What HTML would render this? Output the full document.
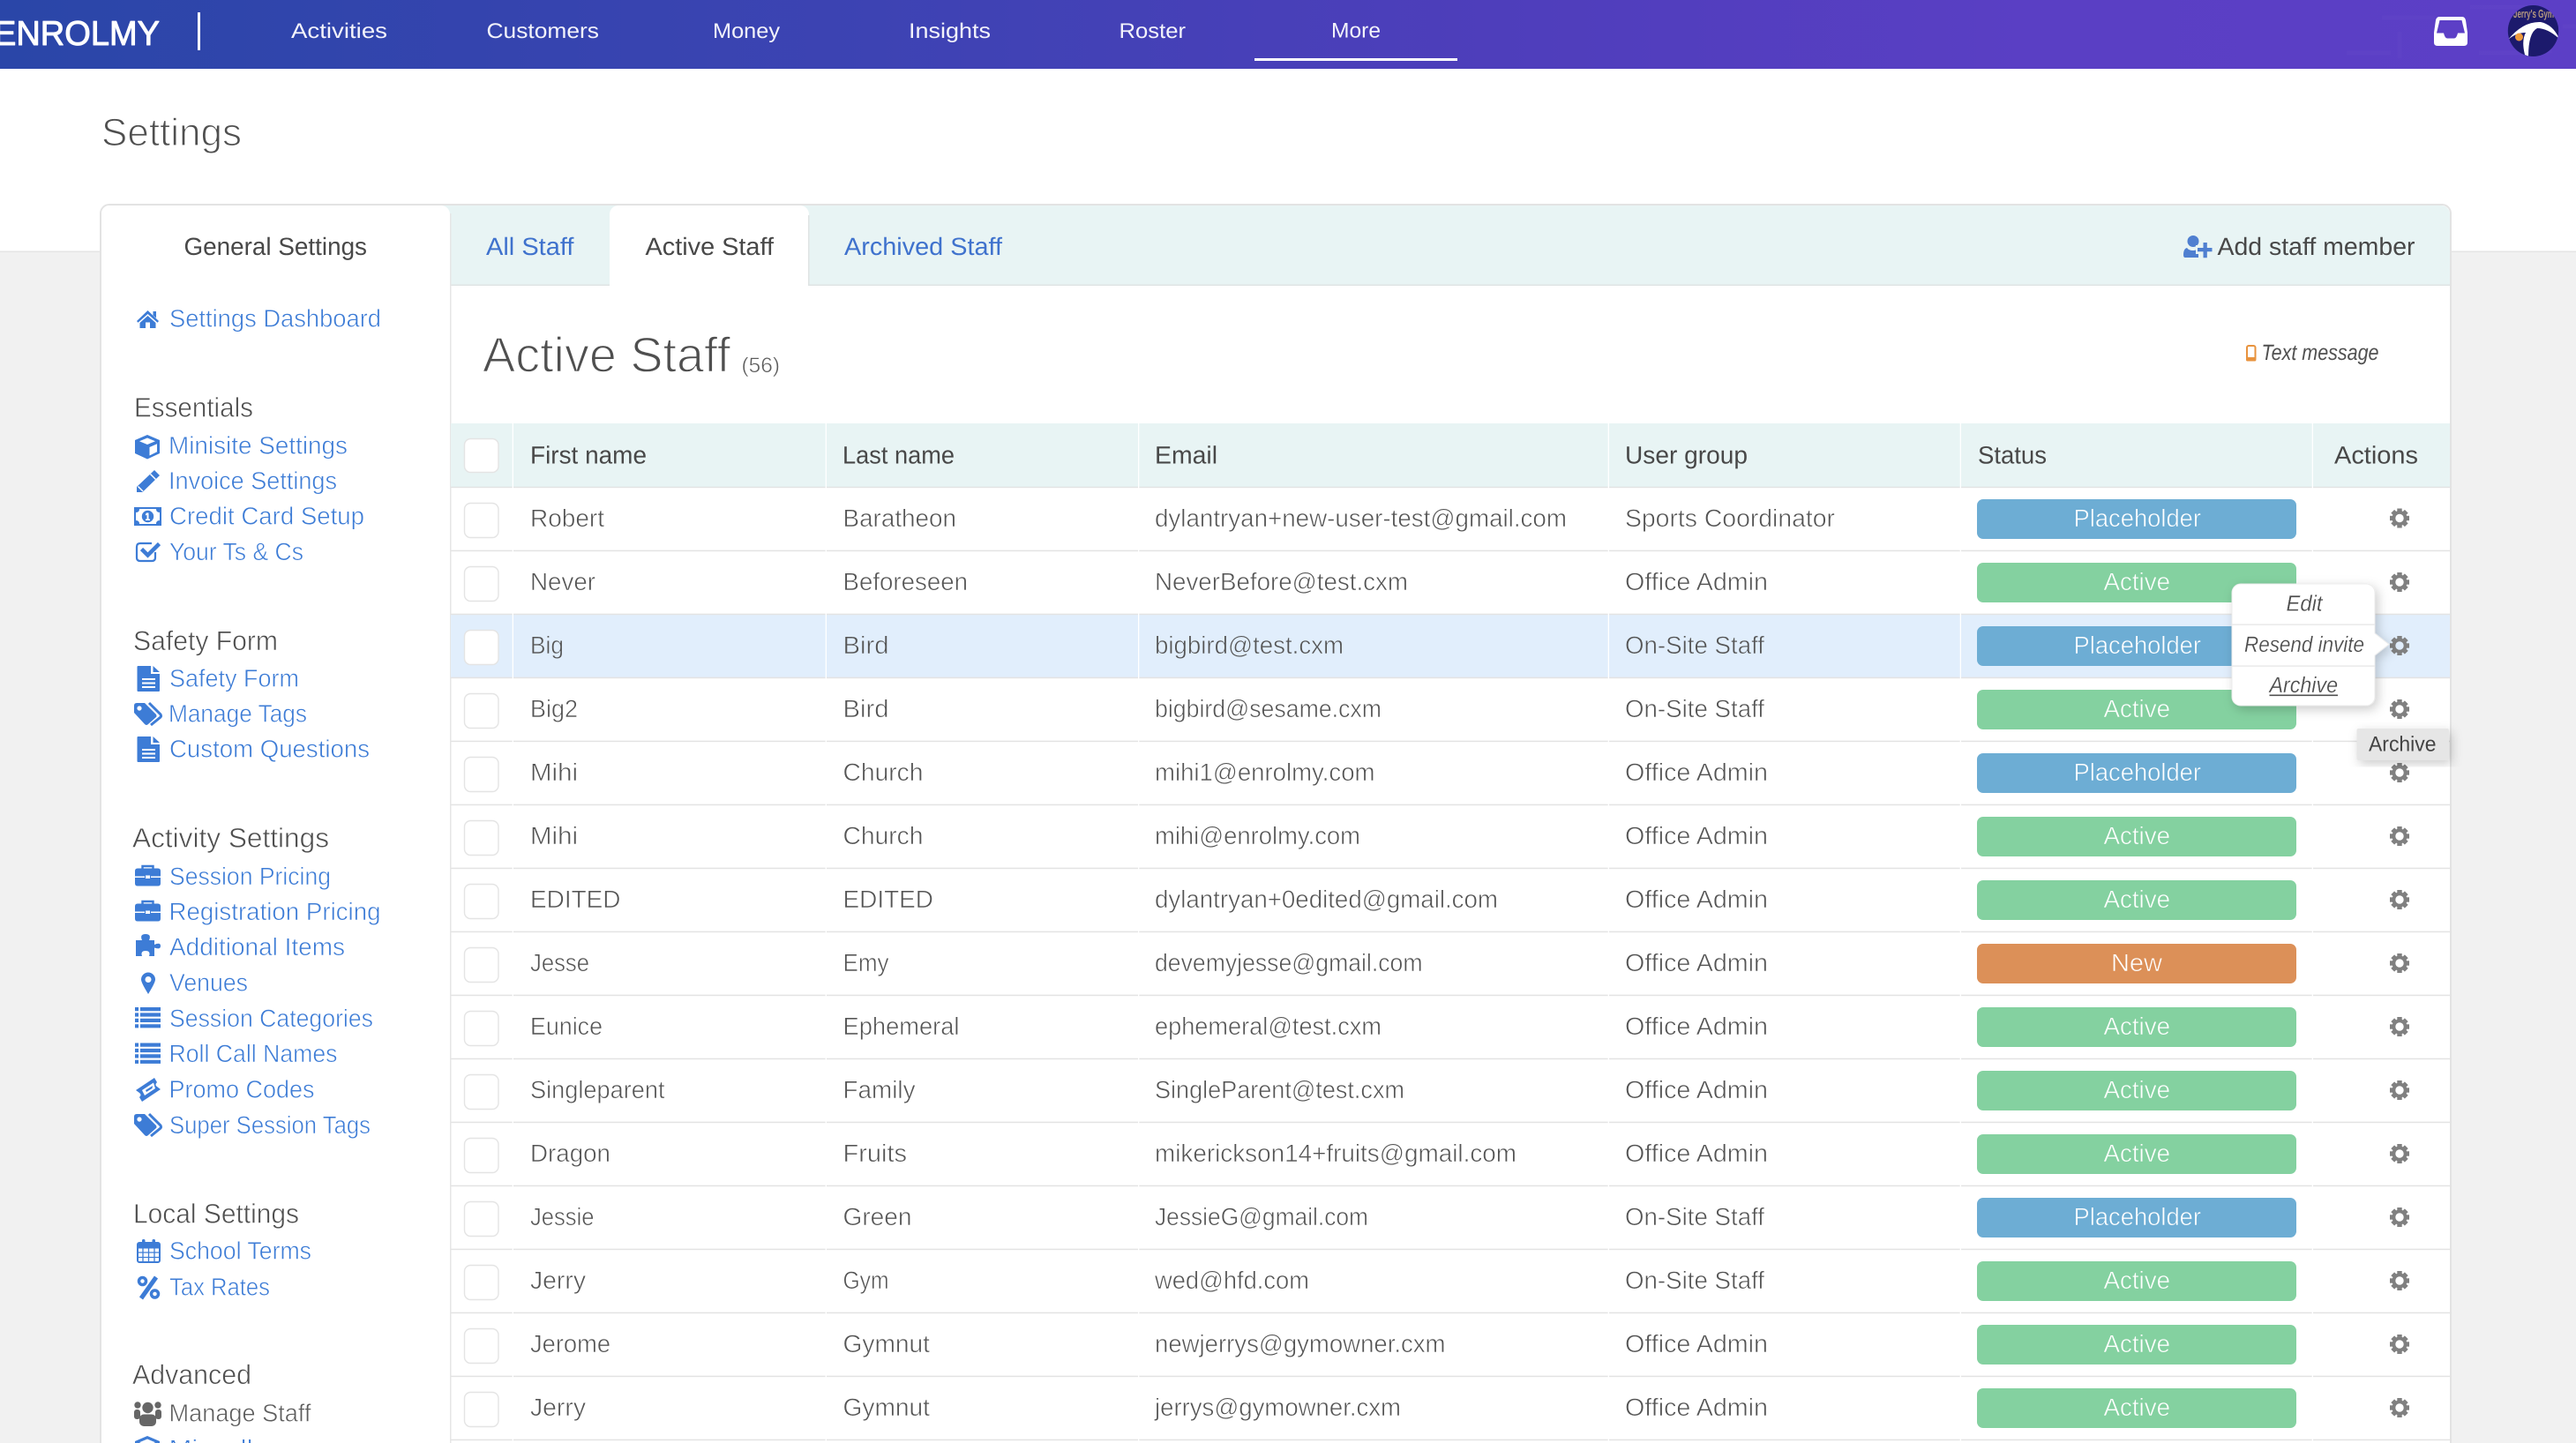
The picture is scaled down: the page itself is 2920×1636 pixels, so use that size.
<!DOCTYPE html>
<html lang="en">
<head>
<meta charset="utf-8">
<title>Settings - Active Staff</title>
<style>
html,body{margin:0;padding:0;width:2920px;height:1636px;overflow:hidden;background:#fff}
svg{display:block}
text{font-family:"Liberation Sans",sans-serif;text-rendering:geometricPrecision}
.b text{font-size:28px;fill:#545454;stroke:#fff;stroke-width:.6px}
.b .hl text{stroke:#e1eefc}
.h text{font-size:28px;fill:#484848}
.l text{font-size:28px;fill:#3d7cd6;stroke:#fff;stroke-width:.6px}
.s text{font-size:31px;fill:#4f4f4f;stroke:#fff;stroke-width:.6px}
.n text{font-size:24px;fill:#f3f3fb}
.w text{font-size:28px;fill:#fff;stroke-width:.6px}
.w .ga{stroke:#84d1a0}.w .gp{stroke:#6dadd4}.w .gn{stroke:#dc9058}
.m text{font-size:25px;font-style:italic;fill:#4c4c4c;stroke:#fff;stroke-width:.25px}
</style>
</head>
<body>
<svg xmlns="http://www.w3.org/2000/svg" width="2920" height="1636" viewBox="0 0 2920 1636">
<defs>
<linearGradient id="nav" gradientUnits="userSpaceOnUse" x1="0" y1="0" x2="2920" y2="0">
<stop offset="0" stop-color="#2a46a8"/><stop offset=".34" stop-color="#3d43b3"/><stop offset=".58" stop-color="#4e3ebb"/><stop offset=".79" stop-color="#5a3fc4"/><stop offset="1" stop-color="#5c3fc6"/>
</linearGradient>
<filter id="sh" x="-20%" y="-20%" width="140%" height="140%"><feDropShadow dx="3" dy="4" stdDeviation="6" flood-color="#000" flood-opacity=".2"/></filter>
<clipPath id="av"><ellipse cx="2871.5" cy="35" rx="28.7" ry="29"/></clipPath>
<g id="gear" fill="#808080">
<circle r="6.6" fill="none" stroke="#808080" stroke-width="3.8"/>
<path d="M-2.7-11h5.4v5h-5.4z"/><path d="M-2.7-11h5.4v5h-5.4z" transform="rotate(45)"/><path d="M-2.7-11h5.4v5h-5.4z" transform="rotate(90)"/><path d="M-2.7-11h5.4v5h-5.4z" transform="rotate(135)"/><path d="M-2.7-11h5.4v5h-5.4z" transform="rotate(180)"/><path d="M-2.7-11h5.4v5h-5.4z" transform="rotate(225)"/><path d="M-2.7-11h5.4v5h-5.4z" transform="rotate(270)"/><path d="M-2.7-11h5.4v5h-5.4z" transform="rotate(315)"/>
</g>
<g id="cube"><path fill="#3d7cd6" d="M167 493L181 499V514L167 520.5L153 514V499Z"/><path fill="#fff" d="M167 496.5L176 500.3L167 504L158 500.3ZM169.5 507L178 503.3V512.3L169.5 516.5Z"/></g>
<g id="file"><path fill="#3d7cd6" d="M155.5 1q0-1 1-1H171V9H181V28q0 1-1 1H156.5q-1 0-1-1Z"/><path fill="#3d7cd6" d="M173.5 0L181 7H173.5Z"/><path fill="#fff" d="M161 14h15v2h-15zM161 18.500h15v2h-15zM161 23h15v2h-15z"/></g>
<g id="tags"><path fill="#3d7cd6" d="M152 3Q152 0 155 0H164L177 13Q178 15 177 16L168 24Q166 26 164 24L152 11Z"/><circle cx="158" cy="6" r="2.600" fill="#fff"/><path fill="none" stroke="#3d7cd6" stroke-width="3" d="M169 0L182 13Q183 15 182 16L171 25"/></g>
<g id="case"><path fill="#3d7cd6" d="M156 5H179Q182 5 182 8V22Q182 25 179 25H156Q153 25 153 22V8Q153 5 156 5Z"/><path fill="none" stroke="#3d7cd6" stroke-width="2.400" d="M161.500 6V2.500H173.500V6"/><path fill="#fff" d="M153 14h11v1.500h-11zM171 14h11v1.500h-11zM165 13h5v3.500h-5z"/></g>
<g id="list" fill="#3d7cd6"><path d="M153 0h4v4.200h-4zM159 0h23v4.200h-23zM153 6.400h4v4.200h-4zM159 6.400h23v4.200h-23zM153 12.800h4v4.200h-4zM159 12.800h23v4.200h-23zM153 19.200h4v4.200h-4zM159 19.200h23v4.200h-23z"/></g>
</defs>

<rect width="2920" height="1636" fill="#fff"/>
<rect y="285" width="2920" height="1351" fill="#f1f1f1"/>
<rect y="284.500" width="2920" height="1.500" fill="#e4e4e4"/>

<!-- top navigation -->
<rect width="2920" height="78" fill="url(#nav)"/>
<g fill="none" stroke="#fff" stroke-opacity=".02" stroke-width="5"><path d="M2700 20h60M2720 36v30M2800 8h70M2810 60h70M2890 16v44M2905 30h15M2660 60h50"/></g>
<text x="-7" y="51" font-size="39" fill="#fff" stroke="#fff" stroke-width="1" stroke-linejoin="round" textLength="188" lengthAdjust="spacingAndGlyphs">ENROLMY</text>
<rect x="224" y="14" width="3" height="43" fill="#fff"/>
<g class="n">
<text x="330" y="43" textLength="109" lengthAdjust="spacingAndGlyphs">Activities</text>
<text x="551.500" y="43" textLength="127.500" lengthAdjust="spacingAndGlyphs">Customers</text>
<text x="808" y="43" textLength="76" lengthAdjust="spacingAndGlyphs">Money</text>
<text x="1030" y="43" textLength="93" lengthAdjust="spacingAndGlyphs">Insights</text>
<text x="1268.500" y="43" textLength="75.500" lengthAdjust="spacingAndGlyphs">Roster</text>
<text x="1509" y="42.500" textLength="56" lengthAdjust="spacingAndGlyphs">More</text>
</g>
<rect x="1422" y="66" width="230" height="3" fill="#fff"/>
<path fill="#fff" fill-rule="evenodd" d="M2765 19h26q3 0 4 4l2 14v11q0 4-4 4h-30q-4 0-4-4V37l2-14q1-4 4-4zM2765.500 23h25l3.500 14.500h-8q-1.500 6-4 6h-8q-2.500 0-4-6h-8z"/>
<g clip-path="url(#av)">
<rect x="2840" y="4" width="64" height="62" fill="#1c1a6c"/>
<text x="2849" y="20" font-size="13" font-weight="bold" style="fill:#b79a80" textLength="46" lengthAdjust="spacingAndGlyphs">Jerry's Gym</text>
<path fill="#fff" d="M2843 45Q2860 24 2880 25Q2894 28 2901 44Q2888 32 2876 32Q2866 37 2866 64L2862 62Q2858 46 2863 37Q2852 37 2843 45Z"/>
<circle cx="2855.500" cy="42" r="4.500" fill="#ee9a3c"/>
</g>

<!-- page title -->
<text x="115" y="165" font-size="44" fill="#4f4f4f" stroke="#fff" stroke-width="1.200" textLength="159" lengthAdjust="spacingAndGlyphs">Settings</text>

<!-- card -->
<path d="M114 1640V242a10 10 0 0 1 10-10H2768a10 10 0 0 1 10 10V1640Z" fill="#fff" stroke="#e3e3e3" stroke-width="2"/>
<path d="M490 233H2767a10 10 0 0 1 10 10V323H490Z" fill="#e8f4f4"/>
<rect x="510" y="322.500" width="2267" height="1.500" fill="#dfe4e4"/>
<path d="M115 1640V242a9 9 0 0 1 9-9H500a10 10 0 0 1 10 10V1640Z" fill="#fff"/>
<rect x="510" y="242" width="1.500" height="1398" fill="#e6e6e6"/>
<path d="M691 325V243a10 10 0 0 1 10-10H907a10 10 0 0 1 10 10V325Z" fill="#fff"/>
<rect x="916" y="244" width="1.500" height="80" fill="#dfe4e4"/>
<text x="551" y="289" font-size="28" fill="#3f72cd" textLength="99.500" lengthAdjust="spacingAndGlyphs">All Staff</text>
<text x="957" y="289" font-size="28" fill="#3f72cd" textLength="179" lengthAdjust="spacingAndGlyphs">Archived Staff</text>
<g class="h">
<text x="731.500" y="289" textLength="145.500" lengthAdjust="spacingAndGlyphs">Active Staff</text>
<text x="208.500" y="289" textLength="207.500" lengthAdjust="spacingAndGlyphs">General Settings</text>
<text x="2513.500" y="289" textLength="224" lengthAdjust="spacingAndGlyphs">Add staff member</text>
</g>
<circle cx="2486" cy="273.500" r="6.500" fill="#4f7fd0"/>
<path fill="#4f7fd0" d="M2475 289q0-7 4-8 2 3 7 3 3 0 6-2v10H2477q-2 0-2-3z"/>
<path fill="#e8f4f4" d="M2489 278h6v-6h10v6h6v10h-6v6h-10v-6h-6z"/>
<path fill="#4f7fd0" d="M2491 281h6.500v-6h4.300v6h5.700v4.200h-5.700v7h-4.300v-7h-6.500z"/>

<!-- heading -->
<text x="547" y="421.500" font-size="56" fill="#4f4f4f" stroke="#fff" stroke-width="1.500" textLength="281" lengthAdjust="spacingAndGlyphs">Active Staff</text>
<text x="840.500" y="422" font-size="24" fill="#5c5c5c" stroke="#fff" stroke-width=".5" textLength="43.500" lengthAdjust="spacingAndGlyphs">(56)</text>
<rect x="2547" y="392" width="9.500" height="16.500" rx="2" fill="#fff" stroke="#e8933e" stroke-width="2"/>
<rect x="2546" y="405" width="11.400" height="4.500" rx="1.500" fill="#e8933e"/>
<text x="2563.500" y="408" font-size="25" font-style="italic" fill="#505050" textLength="133" lengthAdjust="spacingAndGlyphs">Text message</text>

<!-- sidebar links -->
<path fill="#3d7cd6" d="M167.500 352L180 364L178.500 365.800L167.500 356L156.500 365.800L155 364ZM158.500 366L167.500 358L176.500 366V372H170V365.500H165V372H158.500ZM173.500 353H177V360.500L173.500 357.500Z"/>
<g class="l">
<text x="192" y="370.500" textLength="240" lengthAdjust="spacingAndGlyphs">Settings Dashboard</text>
<text x="191" y="514.500" textLength="203" lengthAdjust="spacingAndGlyphs">Minisite Settings</text>
<text x="191" y="554.500" textLength="191" lengthAdjust="spacingAndGlyphs">Invoice Settings</text>
<text x="192" y="594.500" textLength="221" lengthAdjust="spacingAndGlyphs">Credit Card Setup</text>
<text x="192" y="635" textLength="152" lengthAdjust="spacingAndGlyphs">Your Ts &amp; Cs</text>
<text x="192" y="778.500" textLength="147" lengthAdjust="spacingAndGlyphs">Safety Form</text>
<text x="191" y="818.500" textLength="157" lengthAdjust="spacingAndGlyphs">Manage Tags</text>
<text x="192" y="858.500" textLength="227" lengthAdjust="spacingAndGlyphs">Custom Questions</text>
<text x="192" y="1003" textLength="183" lengthAdjust="spacingAndGlyphs">Session Pricing</text>
<text x="191.500" y="1043" textLength="240" lengthAdjust="spacingAndGlyphs">Registration Pricing</text>
<text x="192" y="1083" textLength="199" lengthAdjust="spacingAndGlyphs">Additional Items</text>
<text x="192" y="1123.500" textLength="89" lengthAdjust="spacingAndGlyphs">Venues</text>
<text x="192" y="1164" textLength="231" lengthAdjust="spacingAndGlyphs">Session Categories</text>
<text x="191.500" y="1204" textLength="191" lengthAdjust="spacingAndGlyphs">Roll Call Names</text>
<text x="191.500" y="1244.500" textLength="165" lengthAdjust="spacingAndGlyphs">Promo Codes</text>
<text x="192" y="1285" textLength="228" lengthAdjust="spacingAndGlyphs">Super Session Tags</text>
<text x="192" y="1427.500" textLength="161" lengthAdjust="spacingAndGlyphs">School Terms</text>
<text x="192" y="1468.500" textLength="114" lengthAdjust="spacingAndGlyphs">Tax Rates</text>
<text x="191.500" y="1611.500" style="fill:#5c5c5c" textLength="161" lengthAdjust="spacingAndGlyphs">Manage Staff</text>
<text x="191.500" y="1652" textLength="197" lengthAdjust="spacingAndGlyphs">Miscellaneous</text>
</g>
<g class="s">
<text x="152" y="472.500" textLength="135" lengthAdjust="spacingAndGlyphs">Essentials</text>
<text x="151" y="737" textLength="164" lengthAdjust="spacingAndGlyphs">Safety Form</text>
<text x="150" y="960.500" textLength="223" lengthAdjust="spacingAndGlyphs">Activity Settings</text>
<text x="151" y="1386.500" textLength="188" lengthAdjust="spacingAndGlyphs">Local Settings</text>
<text x="150" y="1569" textLength="135" lengthAdjust="spacingAndGlyphs">Advanced</text>
</g>

<!-- sidebar icons -->
<use href="#cube"/>
<path fill="#3d7cd6" d="M175 533L181 539L161.500 558H155V552Z"/><path stroke="#fff" stroke-width="1.500" d="M170.500 537.500L176.500 543.500M156.500 551.500L162 557"/>
<rect x="152" y="575" width="31" height="21" fill="#3d7cd6"/><path fill="#fff" d="M158 577H177Q177 581 181 581V590Q177 590 177 594H158Q158 590 154 590V581Q158 581 158 577Z"/><circle cx="167.500" cy="585.500" r="6.700" fill="#3d7cd6"/><path fill="#fff" d="M166 581.500h2.500v7h1.500v1.500h-5v-1.500h1.500v-5l-1.500 1v-1.500z"/>
<path fill="none" stroke="#3d7cd6" stroke-width="2.200" d="M176 626V632Q176 636 172 636H159Q155 636 155 632V620Q155 616 159 616H172"/><path fill="none" stroke="#3d7cd6" stroke-width="4.500" d="M160.500 622.500L167.500 629.500L180.500 616.500"/>
<use href="#file" transform="translate(0,755)"/>
<use href="#tags" transform="translate(0,797)"/>
<use href="#file" transform="translate(0,835)"/>
<use href="#case" transform="translate(0,979.500)"/>
<use href="#case" transform="translate(0,1019.500)"/>
<path fill="#3d7cd6" d="M154 1066H161Q158 1059 165 1059Q172 1059 169 1066H175V1071Q182 1068 182 1072.500Q182 1077 175 1074.500V1084H169Q171 1078 165 1078Q159 1078 161 1084H154Z"/>
<path fill="#3d7cd6" d="M168 1127Q160 1114 160 1110.500A8 8 0 0 1 176 1110.500Q176 1114 168 1127Z"/><circle cx="168" cy="1110.500" r="3.500" fill="#fff"/>
<use href="#list" transform="translate(0,1142)"/>
<use href="#list" transform="translate(0,1182.500)"/>
<path fill="#3d7cd6" d="M154 1236L175 1222L178 1227Q175 1230 178 1232L182 1235L161 1249L158 1244Q161 1241 158 1239Z"/><path fill="#fff" d="M161 1236L174 1227.500L176 1234L164 1242Z"/><path fill="#3d7cd6" d="M165 1236L173 1231L172.500 1234L166 1238Z"/>
<use href="#tags" transform="translate(0,1263)"/>
<rect x="156" y="1409" width="25" height="22" rx="2" fill="none" stroke="#3d7cd6" stroke-width="2"/><rect x="156" y="1409" width="25" height="6.500" fill="#3d7cd6"/><path stroke="#3d7cd6" stroke-width="1.300" d="M156 1420h25M156 1425.500h25M162 1415v16M168.500 1415v16M175 1415v16"/><rect x="161" y="1405" width="3.500" height="8" rx="1.500" fill="#3d7cd6"/><rect x="172.500" y="1405" width="3.500" height="8" rx="1.500" fill="#3d7cd6"/>
<circle cx="161.500" cy="1452.500" r="4" fill="none" stroke="#3d7cd6" stroke-width="3.500"/><circle cx="175.500" cy="1467" r="4" fill="none" stroke="#3d7cd6" stroke-width="3.500"/><path stroke="#3d7cd6" stroke-width="5" d="M177 1448L160 1472"/>
<circle cx="167.500" cy="1596" r="6.200" fill="#666"/><circle cx="156" cy="1593" r="3.700" fill="#666"/><circle cx="179" cy="1593" r="3.700" fill="#666"/><rect x="158" y="1603.500" width="19" height="13.500" rx="5" fill="#666"/><rect x="152" y="1598" width="7" height="11" rx="3" fill="#666"/><rect x="176" y="1598" width="7" height="11" rx="3" fill="#666"/>
<use href="#cube" transform="translate(0,1135)"/>

<!-- table -->
<rect x="511" y="480" width="2266" height="72" fill="#e8f4f4"/>
<rect x="511" y="696" width="2266" height="72" fill="#e1eefc"/>
<g fill="#e3e3e3">
<rect x="511" y="551.700" width="2266" height="1.500"/><rect x="511" y="623.700" width="2266" height="1.500"/><rect x="511" y="695.700" width="2266" height="1.500"/><rect x="511" y="767.700" width="2266" height="1.500"/><rect x="511" y="839.700" width="2266" height="1.500"/><rect x="511" y="911.700" width="2266" height="1.500"/><rect x="511" y="983.700" width="2266" height="1.500"/><rect x="511" y="1055.700" width="2266" height="1.500"/><rect x="511" y="1127.700" width="2266" height="1.500"/><rect x="511" y="1199.700" width="2266" height="1.500"/><rect x="511" y="1271.700" width="2266" height="1.500"/><rect x="511" y="1343.700" width="2266" height="1.500"/><rect x="511" y="1415.700" width="2266" height="1.500"/><rect x="511" y="1487.700" width="2266" height="1.500"/><rect x="511" y="1559.700" width="2266" height="1.500"/><rect x="511" y="1631.700" width="2266" height="1.500"/>
</g>
<g fill="#fff">
<rect x="580.700" y="480" width="1.300" height="1156"/><rect x="935.700" y="480" width="1.300" height="1156"/><rect x="1290" y="480" width="1.300" height="1156"/><rect x="1822.700" y="480" width="1.300" height="1156"/><rect x="2221.700" y="480" width="1.300" height="1156"/><rect x="2620.700" y="480" width="1.300" height="1156"/>
</g>
<g fill="#fff" stroke="#e4e4e4" stroke-width="1.400">
<rect x="526.500" y="497.500" width="38.500" height="38" rx="7"/>
<rect x="526.500" y="570.500" width="38.500" height="39" rx="7"/>
<rect x="526.500" y="642.500" width="38.500" height="39" rx="7"/>
<rect x="526.500" y="714.500" width="38.500" height="39" rx="7"/>
<rect x="526.500" y="786.500" width="38.500" height="39" rx="7"/>
<rect x="526.500" y="858.500" width="38.500" height="39" rx="7"/>
<rect x="526.500" y="930.500" width="38.500" height="39" rx="7"/>
<rect x="526.500" y="1002.500" width="38.500" height="39" rx="7"/>
<rect x="526.500" y="1074.500" width="38.500" height="39" rx="7"/>
<rect x="526.500" y="1146.500" width="38.500" height="39" rx="7"/>
<rect x="526.500" y="1218.500" width="38.500" height="39" rx="7"/>
<rect x="526.500" y="1290.500" width="38.500" height="39" rx="7"/>
<rect x="526.500" y="1362.500" width="38.500" height="39" rx="7"/>
<rect x="526.500" y="1434.500" width="38.500" height="39" rx="7"/>
<rect x="526.500" y="1506.500" width="38.500" height="39" rx="7"/>
<rect x="526.500" y="1578.500" width="38.500" height="39" rx="7"/>
</g>
<g class="h">
<text x="601" y="525.500" textLength="132" lengthAdjust="spacingAndGlyphs">First name</text>
<text x="955" y="525.500" textLength="127" lengthAdjust="spacingAndGlyphs">Last name</text>
<text x="1309" y="525.500" textLength="71" lengthAdjust="spacingAndGlyphs">Email</text>
<text x="1842" y="525.500" textLength="139" lengthAdjust="spacingAndGlyphs">User group</text>
<text x="2242" y="525.500" textLength="78" lengthAdjust="spacingAndGlyphs">Status</text>
<text x="2646" y="525.500" textLength="95" lengthAdjust="spacingAndGlyphs">Actions</text>
</g>
<g class="b">
<text x="601" y="597" textLength="84" lengthAdjust="spacingAndGlyphs">Robert</text><text x="955.500" y="597" textLength="128.500" lengthAdjust="spacingAndGlyphs">Baratheon</text><text x="1309" y="597" textLength="467" lengthAdjust="spacingAndGlyphs">dylantryan+new-user-test@gmail.com</text><text x="1842" y="597" textLength="238" lengthAdjust="spacingAndGlyphs">Sports Coordinator</text>
<text x="601" y="669" textLength="74" lengthAdjust="spacingAndGlyphs">Never</text><text x="955.500" y="669" textLength="141.500" lengthAdjust="spacingAndGlyphs">Beforeseen</text><text x="1309" y="669" textLength="287" lengthAdjust="spacingAndGlyphs">NeverBefore@test.cxm</text><text x="1842" y="669" textLength="162" lengthAdjust="spacingAndGlyphs">Office Admin</text>
<g class="hl"><text x="601" y="741" textLength="38" lengthAdjust="spacingAndGlyphs">Big</text><text x="955.500" y="741" textLength="52" lengthAdjust="spacingAndGlyphs">Bird</text><text x="1309" y="741" textLength="214" lengthAdjust="spacingAndGlyphs">bigbird@test.cxm</text><text x="1842" y="741" textLength="158" lengthAdjust="spacingAndGlyphs">On-Site Staff</text></g>
<text x="601" y="813" textLength="54" lengthAdjust="spacingAndGlyphs">Big2</text><text x="955.500" y="813" textLength="52" lengthAdjust="spacingAndGlyphs">Bird</text><text x="1309" y="813" textLength="257" lengthAdjust="spacingAndGlyphs">bigbird@sesame.cxm</text><text x="1842" y="813" textLength="158" lengthAdjust="spacingAndGlyphs">On-Site Staff</text>
<text x="601" y="885" textLength="54" lengthAdjust="spacingAndGlyphs">Mihi</text><text x="955.500" y="885" textLength="91" lengthAdjust="spacingAndGlyphs">Church</text><text x="1309" y="885" textLength="249.500" lengthAdjust="spacingAndGlyphs">mihi1@enrolmy.com</text><text x="1842" y="885" textLength="162" lengthAdjust="spacingAndGlyphs">Office Admin</text>
<text x="601" y="957" textLength="54" lengthAdjust="spacingAndGlyphs">Mihi</text><text x="955.500" y="957" textLength="91" lengthAdjust="spacingAndGlyphs">Church</text><text x="1309" y="957" textLength="233" lengthAdjust="spacingAndGlyphs">mihi@enrolmy.com</text><text x="1842" y="957" textLength="162" lengthAdjust="spacingAndGlyphs">Office Admin</text>
<text x="601" y="1029" textLength="102.500" lengthAdjust="spacingAndGlyphs">EDITED</text><text x="955.500" y="1029" textLength="102.500" lengthAdjust="spacingAndGlyphs">EDITED</text><text x="1309" y="1029" textLength="389" lengthAdjust="spacingAndGlyphs">dylantryan+0edited@gmail.com</text><text x="1842" y="1029" textLength="162" lengthAdjust="spacingAndGlyphs">Office Admin</text>
<text x="601" y="1101" textLength="67" lengthAdjust="spacingAndGlyphs">Jesse</text><text x="955.500" y="1101" textLength="52" lengthAdjust="spacingAndGlyphs">Emy</text><text x="1309" y="1101" textLength="303.500" lengthAdjust="spacingAndGlyphs">devemyjesse@gmail.com</text><text x="1842" y="1101" textLength="162" lengthAdjust="spacingAndGlyphs">Office Admin</text>
<text x="601" y="1173" textLength="82" lengthAdjust="spacingAndGlyphs">Eunice</text><text x="955.500" y="1173" textLength="132" lengthAdjust="spacingAndGlyphs">Ephemeral</text><text x="1309" y="1173" textLength="257" lengthAdjust="spacingAndGlyphs">ephemeral@test.cxm</text><text x="1842" y="1173" textLength="162" lengthAdjust="spacingAndGlyphs">Office Admin</text>
<text x="601" y="1245" textLength="152.500" lengthAdjust="spacingAndGlyphs">Singleparent</text><text x="955.500" y="1245" textLength="82" lengthAdjust="spacingAndGlyphs">Family</text><text x="1309" y="1245" textLength="283" lengthAdjust="spacingAndGlyphs">SingleParent@test.cxm</text><text x="1842" y="1245" textLength="162" lengthAdjust="spacingAndGlyphs">Office Admin</text>
<text x="601" y="1317" textLength="91" lengthAdjust="spacingAndGlyphs">Dragon</text><text x="955.500" y="1317" textLength="72.500" lengthAdjust="spacingAndGlyphs">Fruits</text><text x="1309" y="1317" textLength="410" lengthAdjust="spacingAndGlyphs">mikerickson14+fruits@gmail.com</text><text x="1842" y="1317" textLength="162" lengthAdjust="spacingAndGlyphs">Office Admin</text>
<text x="601" y="1389" textLength="72.500" lengthAdjust="spacingAndGlyphs">Jessie</text><text x="955.500" y="1389" textLength="78" lengthAdjust="spacingAndGlyphs">Green</text><text x="1309" y="1389" textLength="242" lengthAdjust="spacingAndGlyphs">JessieG@gmail.com</text><text x="1842" y="1389" textLength="158" lengthAdjust="spacingAndGlyphs">On-Site Staff</text>
<text x="601" y="1461" textLength="63" lengthAdjust="spacingAndGlyphs">Jerry</text><text x="955.500" y="1461" textLength="52" lengthAdjust="spacingAndGlyphs">Gym</text><text x="1309" y="1461" textLength="175" lengthAdjust="spacingAndGlyphs">wed@hfd.com</text><text x="1842" y="1461" textLength="158" lengthAdjust="spacingAndGlyphs">On-Site Staff</text>
<text x="601" y="1533" textLength="91" lengthAdjust="spacingAndGlyphs">Jerome</text><text x="955.500" y="1533" textLength="98.500" lengthAdjust="spacingAndGlyphs">Gymnut</text><text x="1309" y="1533" textLength="329.500" lengthAdjust="spacingAndGlyphs">newjerrys@gymowner.cxm</text><text x="1842" y="1533" textLength="162" lengthAdjust="spacingAndGlyphs">Office Admin</text>
<text x="601" y="1605" textLength="63" lengthAdjust="spacingAndGlyphs">Jerry</text><text x="955.500" y="1605" textLength="98.500" lengthAdjust="spacingAndGlyphs">Gymnut</text><text x="1309" y="1605" textLength="279" lengthAdjust="spacingAndGlyphs">jerrys@gymowner.cxm</text><text x="1842" y="1605" textLength="162" lengthAdjust="spacingAndGlyphs">Office Admin</text>
</g>

<!-- status badges -->
<rect x="2241" y="566" width="362" height="45" rx="7" fill="#6dadd4"/>
<rect x="2241" y="638" width="362" height="45" rx="7" fill="#84d1a0"/>
<rect x="2241" y="710" width="362" height="45" rx="7" fill="#6dadd4"/>
<rect x="2241" y="782" width="362" height="45" rx="7" fill="#84d1a0"/>
<rect x="2241" y="854" width="362" height="45" rx="7" fill="#6dadd4"/>
<rect x="2241" y="926" width="362" height="45" rx="7" fill="#84d1a0"/>
<rect x="2241" y="998" width="362" height="45" rx="7" fill="#84d1a0"/>
<rect x="2241" y="1070" width="362" height="45" rx="7" fill="#dc9058"/>
<rect x="2241" y="1142" width="362" height="45" rx="7" fill="#84d1a0"/>
<rect x="2241" y="1214" width="362" height="45" rx="7" fill="#84d1a0"/>
<rect x="2241" y="1286" width="362" height="45" rx="7" fill="#84d1a0"/>
<rect x="2241" y="1358" width="362" height="45" rx="7" fill="#6dadd4"/>
<rect x="2241" y="1430" width="362" height="45" rx="7" fill="#84d1a0"/>
<rect x="2241" y="1502" width="362" height="45" rx="7" fill="#84d1a0"/>
<rect x="2241" y="1574" width="362" height="45" rx="7" fill="#84d1a0"/>
<g class="w">
<text class="gp" x="2350.500" y="597" textLength="144.500" lengthAdjust="spacingAndGlyphs">Placeholder</text>
<text class="ga" x="2384.500" y="669" textLength="75.500" lengthAdjust="spacingAndGlyphs">Active</text>
<text class="gp" x="2350.500" y="741" textLength="144.500" lengthAdjust="spacingAndGlyphs">Placeholder</text>
<text class="ga" x="2384.500" y="813" textLength="75.500" lengthAdjust="spacingAndGlyphs">Active</text>
<text class="gp" x="2350.500" y="885" textLength="144.500" lengthAdjust="spacingAndGlyphs">Placeholder</text>
<text class="ga" x="2384.500" y="957" textLength="75.500" lengthAdjust="spacingAndGlyphs">Active</text>
<text class="ga" x="2384.500" y="1029" textLength="75.500" lengthAdjust="spacingAndGlyphs">Active</text>
<text class="gn" x="2393" y="1101" textLength="58" lengthAdjust="spacingAndGlyphs">New</text>
<text class="ga" x="2384.500" y="1173" textLength="75.500" lengthAdjust="spacingAndGlyphs">Active</text>
<text class="ga" x="2384.500" y="1245" textLength="75.500" lengthAdjust="spacingAndGlyphs">Active</text>
<text class="ga" x="2384.500" y="1317" textLength="75.500" lengthAdjust="spacingAndGlyphs">Active</text>
<text class="gp" x="2350.500" y="1389" textLength="144.500" lengthAdjust="spacingAndGlyphs">Placeholder</text>
<text class="ga" x="2384.500" y="1461" textLength="75.500" lengthAdjust="spacingAndGlyphs">Active</text>
<text class="ga" x="2384.500" y="1533" textLength="75.500" lengthAdjust="spacingAndGlyphs">Active</text>
<text class="ga" x="2384.500" y="1605" textLength="75.500" lengthAdjust="spacingAndGlyphs">Active</text>
</g>

<!-- gears -->
<use href="#gear" x="2720" y="587.500"/><use href="#gear" x="2720" y="660"/><use href="#gear" x="2720" y="732"/><use href="#gear" x="2720" y="804"/><use href="#gear" x="2720" y="876"/><use href="#gear" x="2720" y="948"/><use href="#gear" x="2720" y="1020"/><use href="#gear" x="2720" y="1092"/><use href="#gear" x="2720" y="1164"/><use href="#gear" x="2720" y="1236"/><use href="#gear" x="2720" y="1308"/><use href="#gear" x="2720" y="1380"/><use href="#gear" x="2720" y="1452"/><use href="#gear" x="2720" y="1524"/><use href="#gear" x="2720" y="1596"/>

<!-- popover -->
<g filter="url(#sh)">
<path fill="#fff" d="M2540 662H2682a10 10 0 0 1 10 10V718L2708 730.500L2692 743V790a10 10 0 0 1-10 10H2540a10 10 0 0 1-10-10V672a10 10 0 0 1 10-10Z" stroke="#ececec" stroke-width="1"/>
</g>
<rect x="2530.500" y="707.500" width="161" height="1.200" fill="#e3e3e3"/>
<rect x="2530.500" y="754.500" width="161" height="1.200" fill="#e3e3e3"/>
<g class="m">
<text x="2591.500" y="692.500" textLength="41" lengthAdjust="spacingAndGlyphs">Edit</text>
<text x="2544" y="739" textLength="136" lengthAdjust="spacingAndGlyphs">Resend invite</text>
<text x="2572.500" y="785" textLength="77.500" lengthAdjust="spacingAndGlyphs">Archive</text>
</g>
<rect x="2572.500" y="787.500" width="77.500" height="1.600" fill="#505050"/>

<!-- tooltip -->
<g filter="url(#sh)"><rect x="2671.500" y="826" width="104.500" height="36" rx="2" fill="#e6e6e6"/></g>
<text x="2685" y="851.500" font-size="24" fill="#444" textLength="76.500" lengthAdjust="spacingAndGlyphs">Archive</text>
</svg>
</body>
</html>
